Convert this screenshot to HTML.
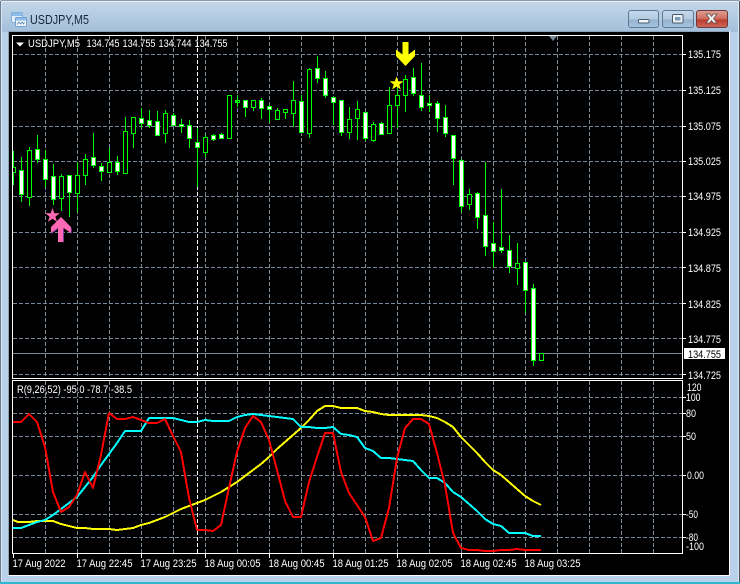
<!DOCTYPE html>
<html><head><meta charset="utf-8"><title>USDJPY,M5</title>
<style>html,body{margin:0;padding:0;background:#b9d1ea;width:740px;height:584px;overflow:hidden}svg{display:block}text{font-family:"Liberation Sans",sans-serif;font-size:11px;fill:#fff}</style></head>
<body>
<svg width="740" height="584" viewBox="0 0 740 584" xmlns="http://www.w3.org/2000/svg" shape-rendering="crispEdges">
<defs>
<linearGradient id="tb" x1="0" y1="0" x2="0" y2="1"><stop offset="0" stop-color="#c6d8e9"/><stop offset="1" stop-color="#a3bfda"/></linearGradient>
<linearGradient id="btn" x1="0" y1="0" x2="0" y2="1"><stop offset="0" stop-color="#c5d8ea"/><stop offset=".5" stop-color="#b3cbe1"/><stop offset=".55" stop-color="#95b2cf"/><stop offset="1" stop-color="#a8c4de"/></linearGradient>
<linearGradient id="cl" x1="0" y1="0" x2="0" y2="1"><stop offset="0" stop-color="#dfa197"/><stop offset=".5" stop-color="#cf6a5c"/><stop offset=".55" stop-color="#bd3a2c"/><stop offset="1" stop-color="#cc6a5a"/></linearGradient>
<clipPath id="cm"><rect x="13" y="36" width="669" height="342"/></clipPath>
<clipPath id="cs"><rect x="13" y="381" width="669" height="172"/></clipPath>
</defs>
<!-- frame -->
<rect width="740" height="584" fill="#b9d1ea"/>
<rect x="0" y="0" width="740" height="32" fill="url(#tb)"/>
<rect x="1" y="0" width="738" height="1" fill="#8a9aa8"/>
<rect x="1" y="1" width="738" height="1" fill="#e6eef5"/>
<rect x="0" y="1" width="1" height="583" fill="#6d7f8e"/>
<rect x="1" y="2" width="1" height="580" fill="#d8e5f1"/>
<rect x="739" y="1" width="1" height="583" fill="#4a5560"/>
<rect x="738" y="2" width="1" height="580" fill="#d8e5f1"/>
<rect x="0" y="582" width="740" height="2" fill="#2fb8d2"/>
<rect x="8" y="31" width="722" height="545" fill="#fff"/>
<rect x="8" y="31" width="721" height="1" fill="#8fa3b6"/>
<rect x="8" y="31" width="1" height="544" fill="#8fa3b6"/>
<rect x="9" y="32" width="720" height="543" fill="#000"/>
<!-- title -->
<g shape-rendering="auto">
<rect x="11.500" y="12.500" width="11" height="10" rx="1" fill="#e3eef8" stroke="#7fb0dc"/>
<rect x="12" y="13" width="10" height="3" fill="#8dbce6"/>
<rect x="15.500" y="17.500" width="11" height="9" rx="1" fill="#f4f8fc" stroke="#6ea3d2"/>
<rect x="16" y="18" width="10" height="2.500" fill="#8dbce6"/>
<path d="M17 24.500l2-2.500 1.500 2 1.500-2 1.500 2 1-1.500" fill="none" stroke="#4d7fa8" stroke-width=".8"/>
<text x="30" y="24" textLength="59" lengthAdjust="spacingAndGlyphs" style="font-size:12.500px;fill:#16263a">USDJPY,M5</text>
</g>
<!-- buttons -->
<g shape-rendering="auto">
<rect x="628.500" y="10.500" width="30" height="17" rx="2.500" fill="url(#btn)" stroke="#5c7a96"/>
<rect x="638.500" y="19.500" width="10.500" height="3.500" rx="1" fill="#f3f6f9" stroke="#4a5d70"/>
<rect x="662.500" y="10.500" width="31" height="17" rx="2.500" fill="url(#btn)" stroke="#5c7a96"/>
<rect x="672.500" y="14.500" width="10.500" height="8.500" rx="1" fill="#eef3f8" stroke="#47596b"/>
<rect x="675" y="17" width="5.500" height="3.500" fill="#7f9bb6"/>
<rect x="696.500" y="10.500" width="31" height="17" rx="2.500" fill="url(#cl)" stroke="#6e3a3d"/>
<path d="M706 14h3.500l2 2.500 2-2.500H717l-3.500 4.500 3.500 4.500h-3.500l-2-2.500-2 2.500H706l3.500-4.500z" fill="#f2f2f2" stroke="#5a4a4a" stroke-width=".7"/>
</g>
<!-- grid main -->
<g stroke="#778899" stroke-width="1" stroke-dasharray="4 2" fill="none" clip-path="url(#cm)">
<path d="M13 54.500H682M13 90.500H682M13 126.500H682M13 161.500H682M13 196.500H682M13 232.500H682M13 267.500H682M13 303.500H682M13 338.500H682M13 374.500H682"/>
<path d="M45.500 36V378M77.500 36V378M109.500 36V378M141.500 36V378M173.500 36V378M205.500 36V378M237.500 36V378M269.500 36V378M301.500 36V378M333.500 36V378M365.500 36V378M397.500 36V378M429.500 36V378M461.500 36V378M493.500 36V378M525.500 36V378M557.500 36V378M589.500 36V378M621.500 36V378M653.500 36V378"/>
<path d="M197.500 36V378" stroke="#fff"/>
</g>
<rect x="13" y="353" width="669" height="1" fill="#778899"/>
<!-- grid sub -->
<g stroke="#778899" stroke-width="1" stroke-dasharray="4 2" fill="none" clip-path="url(#cs)">
<path d="M13 397.500H682M13 413.500H682M13 436.500H682M13 475.500H682M13 514.500H682M13 537.500H682"/>
<path d="M45.500 381V553M77.500 381V553M109.500 381V553M141.500 381V553M173.500 381V553M205.500 381V553M237.500 381V553M269.500 381V553M301.500 381V553M333.500 381V553M365.500 381V553M397.500 381V553M429.500 381V553M461.500 381V553M493.500 381V553M525.500 381V553M557.500 381V553M589.500 381V553M621.500 381V553M653.500 381V553"/>
<path d="M197.500 381V553" stroke="#fff"/>
</g>
<!-- wicks -->
<g clip-path="url(#cm)">
<path fill="none" stroke="#00ff00" d="M13.500 151V185M21.500 157V202M29.500 147V206M37.500 135V163M45.500 150V187M53.500 164V205M61.500 174V211M69.500 176V217M77.500 162V212M85.500 154V185M93.500 133V168M101.500 163V181M109.500 148V172M117.500 156V175M125.500 117V174M133.500 117V148M141.500 108V128M149.500 110V128M157.500 111V133M165.500 110V143M173.500 113V126M181.500 119V133M189.500 120V148M197.500 128V187M205.500 135V157M213.500 134V141M221.500 133V139M237.500 95V107M245.500 100V117M253.500 100V111M261.500 98V119M269.500 105V122M277.500 108V119M285.500 109V119M293.500 81V127M301.500 95V132M309.500 68V138M317.500 56V83M325.500 71V98M333.500 97V125M341.500 100V136M349.500 107V139M357.500 101V140M365.500 112V141M373.500 122V142M381.500 122V134M389.500 87V133M397.500 88V128M405.500 75V112M413.500 68V96M421.500 63V111M429.500 95V112M437.500 101V132M445.500 105V137M453.500 135V185M461.500 159V212M469.500 189V210M477.500 192V229M485.500 162V256M493.500 222V267M501.500 189V253M509.500 235V273M517.500 243V285M525.500 262V313M533.500 284V366"/>
<!-- bearish (white) bodies -->
<path fill="#fff" stroke="#00ff00" d="M19.500 170.500h4v24h-4zM35.500 149.500h4v10h-4zM43.500 159.500h4v20h-4zM51.500 176.500h4v23h-4zM67.500 175.500h4v17h-4zM91.500 157.500h4v8h-4zM99.500 166.500h4v5h-4zM115.500 162.500h4v9h-4zM139.500 118.500h4v5h-4zM147.500 120.500h4v5h-4zM155.500 121.500h4v14h-4zM171.500 115.500h4v10h-4zM179.500 124.500h4v2h-4zM187.500 125.500h4v13h-4zM195.500 142.500h4v5h-4zM211.500 135.500h4v4h-4zM219.500 134.500h4v4h-4zM243.500 100.500h4v7h-4zM259.500 100.500h4v8h-4zM267.500 106.500h4v3h-4zM299.500 101.500h4v31h-4zM315.500 68.500h4v10h-4zM323.500 78.500h4v17h-4zM331.500 97.500h4v5h-4zM339.500 100.500h4v32h-4zM363.500 112.500h4v26h-4zM379.500 123.500h4v11h-4zM411.500 77.500h4v16h-4zM419.500 95.500h4v12h-4zM427.500 103.500h4v2h-4zM435.500 103.500h4v15h-4zM443.500 117.500h4v16h-4zM451.500 135.500h4v23h-4zM459.500 160.500h4v46h-4zM475.500 193.500h4v24h-4zM483.500 215.500h4v31h-4zM491.500 243.500h4v8h-4zM499.500 247.500h4v3h-4zM507.500 250.500h4v16h-4zM523.500 262.500h4v28h-4zM531.500 288.500h4v72h-4z"/>
<!-- bullish (black) bodies -->
<path fill="#000" stroke="#00ff00" d="M11.500 167.500h4v5h-4zM27.500 150.500h4v47h-4zM59.500 176.500h4v22h-4zM75.500 175.500h4v18h-4zM83.500 159.500h4v16h-4zM107.500 162.500h4v10h-4zM123.500 131.500h4v42h-4zM131.500 117.500h4v16h-4zM163.500 113.500h4v20h-4zM203.500 137.500h4v15h-4zM227.500 95.500h4v43h-4zM235.500 100.500h4v2h-4zM251.500 100.500h4v7h-4zM275.500 110.500h4v9h-4zM283.500 109.500h4v3h-4zM291.500 100.500h4v13h-4zM307.500 69.500h4v64h-4zM347.500 119.500h4v13h-4zM355.500 109.500h4v9h-4zM371.500 124.500h4v16h-4zM387.500 105.500h4v28h-4zM395.500 95.500h4v10h-4zM403.500 79.500h4v16h-4zM467.500 194.500h4v10h-4zM515.500 263.500h4v5h-4zM539.500 353.500h4v7h-4z"/>
</g>
<path d="M238 101h-2v1h2z" fill="#0f0"/>
<!-- arrows and stars -->
<g shape-rendering="auto">
<path d="M61 217L71 227V233L63.500 228V242H58V228L51 233V227Z" fill="#ff69b4"/>
<path d="M63.500 229V242.500M71.300 228V233.500M51 233.500L57.500 229" fill="none" stroke="#7a3aa8" stroke-width=".8"/>
<path d="M52.500 208l1.800 5.200 5.500.1-4.400 3.300 1.600 5.300-4.500-3.200-4.500 3.200 1.600-5.300-4.400-3.300 5.500-.1z" fill="#ff69b4"/>
<path d="M402.500 42h6V54.500L415 49.500V56L405.500 66L396 56V49.500L402.500 54.500Z" fill="#ffff00"/>
<path d="M396.500 76.500l1.700 4.800 5.200.1-4.100 3.100 1.500 5-4.300-3-4.300 3 1.500-5-4.100-3.100 5.200-.1z" fill="#ffff00"/>
<path d="M549 36h8l-4 5z" fill="#778899"/>
<path d="M16 42.500h8l-4 4z" fill="#fff"/>
</g>
<!-- indicator lines -->
<g fill="none" stroke-width="2" stroke-linejoin="round" clip-path="url(#cs)">
<polyline stroke="#ffff00" points="13,520 18,522 29,522 37,521 45,521 53,521 61,524 69,526 77,528 85,528 93,529 101,529 109,529 117,530 125,529 133,528 141,525 149,523 157,520 165,517 173,513 181,509 189,506 197,503 205,500 213,496 221,492 229,487 237,482 245,476 253,470 261,464 269,457 277,449 285,442 293,435 301,428 309,420 317,411 325,406 333,406 341,408 349,408 357,408 365,411 373,412 381,414 389,415 397,415 405,415 413,415 421,415 429,416 437,418 445,422 453,427 461,437 469,445 477,453 485,462 493,470 501,475 509,482 517,489 525,496 533,501 541,505"/>
<polyline stroke="#00ffff" points="13,528 21,528 29,525 37,522 45,520 53,515 61,509 69,503 77,497 85,487 93,477 101,465 109,454 117,443 125,431 133,431 141,431 149,418 157,418 165,418 173,418 181,420 189,422 197,422 205,420 213,421 221,421 229,421 237,417 245,415 253,414 261,415 269,416 277,417 285,418 293,419 301,427 309,427 317,428 325,428 333,427 341,434 349,435 357,437 365,448 373,451 381,458 389,458 397,459 405,460 413,461 421,470 429,478 437,478 445,483 453,492 461,497 469,504 477,511 485,519 493,524 501,526 509,533 517,533 525,533 533,536 541,536"/>
<polyline stroke="#ff0000" points="13,422 21,422 29,414 37,422 45,447 53,492 61,512 69,507 77,495 85,472 93,488 101,455 109,413 117,419 125,419 133,417 141,420 149,423 157,423 165,419 173,436 181,452 189,498 197,530 205,530 213,531 221,525 229,488 237,452 245,428 253,416 261,422 269,440 277,470 285,501 293,517 301,517 309,482 317,457 325,433 333,433 341,472 349,493 357,505 365,517 373,541 381,538 389,508 397,458 405,428 413,419 421,419 429,424 437,453 445,485 453,533 461,548 469,550 477,550 485,551 493,551 501,550 509,550 517,549 525,550 533,550 541,550"/>
</g>
<!-- chart borders -->
<g fill="none" stroke="#fff">
<path d="M12.500 35.500H682.500V378.500H12.500Z"/>
<path d="M12.500 380.500H682.500V553.500H12.500Z"/>
<path d="M683 54.500h3M683 90.500h3M683 126.500h3M683 161.500h3M683 196.500h3M683 232.500h3M683 267.500h3M683 303.500h3M683 338.500h3M683 374.500h3"/>
<path d="M683 397.500h3M683 413.500h3M683 436.500h3M683 475.500h3M683 514.500h3M683 537.500h3"/>
<path d="M13.500 554v4M77.500 554v4M141.500 554v4M205.500 554v4M269.500 554v4M333.500 554v4M397.500 554v4M461.500 554v4M525.500 554v4"/>
</g>
<!-- labels -->
<g shape-rendering="auto">
<text x="28" y="47" textLength="52" lengthAdjust="spacingAndGlyphs">USDJPY,M5</text>
<text x="86.500" y="47" textLength="33" lengthAdjust="spacingAndGlyphs">134.745</text>
<text x="122.500" y="47" textLength="33" lengthAdjust="spacingAndGlyphs">134.755</text>
<text x="158.500" y="47" textLength="33" lengthAdjust="spacingAndGlyphs">134.744</text>
<text x="194.500" y="47" textLength="33" lengthAdjust="spacingAndGlyphs">134.755</text>
<text x="17" y="393" textLength="115" lengthAdjust="spacingAndGlyphs">R(9,26,52) -95.0 -78.7 -38.5</text>
<text x="688" y="58" textLength="33" lengthAdjust="spacingAndGlyphs">135.175</text>
<text x="688" y="94" textLength="33" lengthAdjust="spacingAndGlyphs">135.125</text>
<text x="688" y="130" textLength="33" lengthAdjust="spacingAndGlyphs">135.075</text>
<text x="688" y="165" textLength="33" lengthAdjust="spacingAndGlyphs">135.025</text>
<text x="688" y="200" textLength="33" lengthAdjust="spacingAndGlyphs">134.975</text>
<text x="688" y="236" textLength="33" lengthAdjust="spacingAndGlyphs">134.925</text>
<text x="688" y="272" textLength="33" lengthAdjust="spacingAndGlyphs">134.875</text>
<text x="688" y="308" textLength="33" lengthAdjust="spacingAndGlyphs">134.825</text>
<text x="688" y="343" textLength="33" lengthAdjust="spacingAndGlyphs">134.775</text>
<text x="688" y="379" textLength="33" lengthAdjust="spacingAndGlyphs">134.725</text>
<rect x="684" y="348" width="41" height="11" fill="#fff" shape-rendering="crispEdges"/>
<text x="688" y="358" textLength="33" lengthAdjust="spacingAndGlyphs" style="fill:#000">134.755</text>
<text x="687" y="391" textLength="14.500" lengthAdjust="spacingAndGlyphs">120</text>
<text x="686" y="401" textLength="14.500" lengthAdjust="spacingAndGlyphs">100</text>
<text x="686" y="417" textLength="10" lengthAdjust="spacingAndGlyphs">80</text>
<text x="686" y="440" textLength="10" lengthAdjust="spacingAndGlyphs">50</text>
<text x="687" y="479" textLength="17" lengthAdjust="spacingAndGlyphs">0.00</text>
<text x="686" y="518" textLength="12" lengthAdjust="spacingAndGlyphs">-50</text>
<text x="686" y="541" textLength="12" lengthAdjust="spacingAndGlyphs">-80</text>
<text x="686" y="550" textLength="18" lengthAdjust="spacingAndGlyphs">-100</text>
<text x="12.500" y="567" textLength="53" lengthAdjust="spacingAndGlyphs">17 Aug 2022</text>
<text x="76.500" y="567" textLength="56" lengthAdjust="spacingAndGlyphs">17 Aug 22:45</text>
<text x="140.500" y="567" textLength="56" lengthAdjust="spacingAndGlyphs">17 Aug 23:25</text>
<text x="204.500" y="567" textLength="56" lengthAdjust="spacingAndGlyphs">18 Aug 00:05</text>
<text x="268.500" y="567" textLength="56" lengthAdjust="spacingAndGlyphs">18 Aug 00:45</text>
<text x="332.500" y="567" textLength="56" lengthAdjust="spacingAndGlyphs">18 Aug 01:25</text>
<text x="396.500" y="567" textLength="56" lengthAdjust="spacingAndGlyphs">18 Aug 02:05</text>
<text x="460.500" y="567" textLength="56" lengthAdjust="spacingAndGlyphs">18 Aug 02:45</text>
<text x="524.500" y="567" textLength="56" lengthAdjust="spacingAndGlyphs">18 Aug 03:25</text>
</g>
</svg>
</body></html>
